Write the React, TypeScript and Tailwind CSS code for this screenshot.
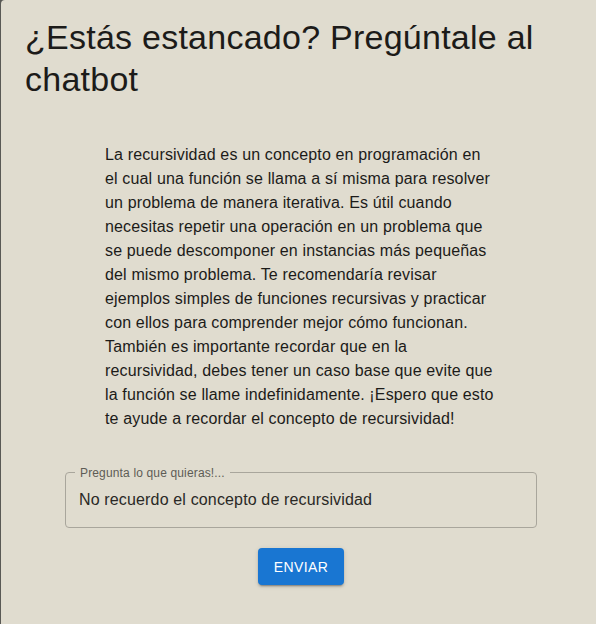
import { useState } from "react";

const answer =
    "La recursividad es un concepto en programación en el cual una función se llama a sí misma para resolver un problema de manera iterativa. Es útil cuando necesitas repetir una operación en un problema que se puede descomponer en instancias más pequeñas del mismo problema. Te recomendaría revisar ejemplos simples de funciones recursivas y practicar con ellos para comprender mejor cómo funcionan. También es importante recordar que en la recursividad, debes tener un caso base que evite que la función se llame indefinidamente. ¡Espero que esto te ayude a recordar el concepto de recursividad!";

const App = () => {
    const [question, setQuestion] = useState("No recuerdo el concepto de recursividad");

    return (
        <div className="flex w-[596px] h-[624px] overflow-hidden bg-[#595955] font-['Liberation_Sans',Arial,sans-serif]">
            <div className="ml-px flex-1 flex flex-col bg-[#e0dccf] text-[#1c1b19] rounded-tl-[4px]">
                <h2 className="pt-4 px-6 text-[34px] leading-[42px] tracking-[0.25px] font-normal">
                    ¿Estás estancado? Pregúntale al chatbot
                </h2>

                <p className="mt-[43px] ml-[104px] w-[392px] text-base leading-6 tracking-[0.15px]">{answer}</p>

                <div className="relative mt-[41px] ml-[64px] w-[472px] h-14 rounded-[4px] border border-[#a9a69c]">
                    <span className="absolute -top-[8px] left-[9px] px-[5px] bg-[#e0dccf] text-xs leading-4 tracking-[0.15px] text-[#5e5c56]">
                        Pregunta lo que quieras!...
                    </span>
                    <input
                        value={question}
                        onChange={(e) => setQuestion(e.target.value)}
                        className="w-full h-full px-[13px] bg-transparent text-base tracking-[0.15px] text-[#2a2926] outline-none"
                    />
                </div>

                <button className="mt-5 ml-[257px] w-[86px] h-[37px] rounded-[4px] bg-[#1976d2] text-white text-sm font-medium tracking-[0.4px] uppercase shadow-[0_3px_1px_-2px_rgba(0,0,0,0.2),0_2px_2px_0_rgba(0,0,0,0.14),0_1px_5px_0_rgba(0,0,0,0.12)]">
                    Enviar
                </button>
            </div>
        </div>
    );
};

export default App;
